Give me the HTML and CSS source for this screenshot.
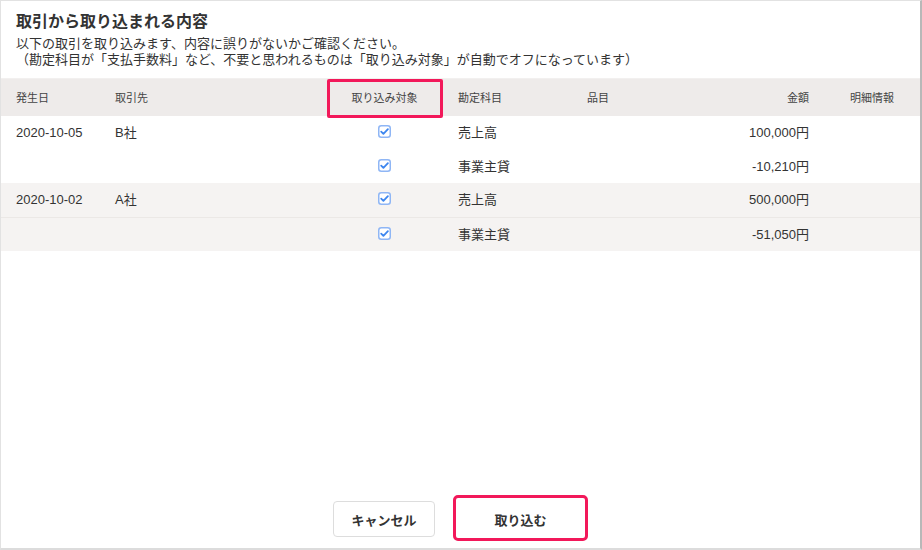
FILE: index.html
```html
<!DOCTYPE html>
<html lang="ja">
<head>
    <meta charset="UTF-8">
    <meta name="viewport" content="width=device-width, initial-scale=1.0">
    <title>取引から取り込まれる内容</title>
    <link rel="stylesheet" href="styles.css">
</head>
<body>
    <div class="modal">
        <div class="modal-body">
            <h1 class="modal-title">取引から取り込まれる内容</h1>
            <p class="modal-desc">以下の取引を取り込みます、内容に誤りがないかご確認ください。<br>（勘定科目が「支払手数料」など、不要と思われるものは「取り込み対象」が自動でオフになっています）</p>

            <table class="deal-table">
                <colgroup>
                    <col style="width: 99px">
                    <col style="width: 226px">
                    <col style="width: 117px">
                    <col style="width: 129px">
                    <col style="width: 132px">
                    <col style="width: 120px">
                    <col>
                </colgroup>
                <thead>
                    <tr>
                        <th>発生日</th>
                        <th>取引先</th>
                        <th class="center highlight">取り込み対象</th>
                        <th>勘定科目</th>
                        <th>品目</th>
                        <th class="right">金額</th>
                        <th class="center">明細情報</th>
                    </tr>
                </thead>
                <tbody class="group">
                    <tr>
                        <td>2020-10-05</td>
                        <td>B社</td>
                        <td class="center"><span class="check"></span></td>
                        <td>売上高</td>
                        <td></td>
                        <td class="right">100,000円</td>
                        <td></td>
                    </tr>
                    <tr>
                        <td></td>
                        <td></td>
                        <td class="center"><span class="check"></span></td>
                        <td>事業主貸</td>
                        <td></td>
                        <td class="right">-10,210円</td>
                        <td></td>
                    </tr>
                </tbody>
                <tbody class="group alt">
                    <tr>
                        <td>2020-10-02</td>
                        <td>A社</td>
                        <td class="center"><span class="check"></span></td>
                        <td>売上高</td>
                        <td></td>
                        <td class="right">500,000円</td>
                        <td></td>
                    </tr>
                    <tr>
                        <td></td>
                        <td></td>
                        <td class="center"><span class="check"></span></td>
                        <td>事業主貸</td>
                        <td></td>
                        <td class="right">-51,050円</td>
                        <td></td>
                    </tr>
                </tbody>
            </table>
        </div>

        <div class="modal-footer">
            <button class="btn">キャンセル</button>
            <button class="btn btn-primary">取り込む</button>
        </div>
    </div>

    <script>
        // checkbox icon
        const checkSvg = '<svg width="13" height="13" viewBox="0 0 13 13">' +
            '<rect x="0.75" y="0.75" width="11.5" height="11.5" rx="2.5" fill="#fff" stroke="#8fb6f5" stroke-width="1.5"/>' +
            '<path d="M3.2 6.6 L5.4 8.8 L9.9 4.2" fill="none" stroke="#3d86ef" stroke-width="1.8" stroke-linecap="round" stroke-linejoin="round"/>' +
            '</svg>';
        document.querySelectorAll('.check').forEach(el => {
            el.innerHTML = checkSvg;
        });
    </script>
</body>
</html>
```

FILE: styles.css
```css
html, body {
    margin: 0;
    height: 100%;
}
body {
    font-family: 'Liberation Sans', 'Noto Sans CJK JP', sans-serif;
    color: #333333;
    background: #ffffff;
}
.modal {
    box-sizing: border-box;
    height: 100vh;
    display: flex;
    flex-direction: column;
    border: 1px solid #e2e2e2;
    border-right: 2px solid #b8b8b8;
    border-bottom: 2px solid #dcdcdc;
}
.modal-body {
    flex: 1;
    padding-top: 10px;
}
.modal-title {
    margin: 0;
    padding: 0 15px;
    font-size: 16px;
    line-height: 22px;
    font-weight: bold;
    color: #333333;
}
.modal-desc {
    margin: 3px 0 10px;
    padding: 0 15px;
    font-size: 13px;
    line-height: 16px;
}
.deal-table {
    width: 100%;
    table-layout: fixed;
    border-collapse: collapse;
    border-top: 1px solid #f2f0ef;
}
.deal-table th {
    height: 37px;
    padding: 0 15px;
    background: #eeebea;
    font-size: 11px;
    line-height: 14px;
    font-weight: normal;
    text-align: left;
    color: #444444;
}
.deal-table td {
    height: 33px;
    padding: 0 15px;
    font-size: 13px;
    line-height: 16px;
    white-space: nowrap;
}
.deal-table tbody tr:first-child td {
    height: 34px;
}
.deal-table .center {
    text-align: center;
}
.deal-table .right {
    text-align: right;
}
.deal-table th.highlight {
    position: relative;
}
.deal-table th.highlight::after {
    content: '';
    position: absolute;
    left: 1px;
    right: 0;
    top: 0;
    bottom: -2px;
    border: 3px solid #f2185a;
    border-radius: 2px;
}
.group.alt td {
    background: #f5f3f2;
}
.group.alt tr + tr td {
    border-top: 1px solid #ebe8e6;
}
.check {
    display: inline-block;
    width: 13px;
    height: 13px;
    vertical-align: middle;
    position: relative;
    top: -2px;
}
.check svg {
    display: block;
}
.modal-footer {
    display: flex;
    justify-content: center;
    gap: 24px;
    padding: 0 6px 11px 0;
}
.btn {
    font-family: 'Liberation Sans', 'Noto Sans CJK JP', sans-serif;
    width: 102px;
    height: 36px;
    background: #ffffff;
    border: 1px solid #dddddd;
    border-radius: 4px;
    font-size: 13px;
    font-weight: bold;
    color: #333333;
    cursor: pointer;
}
.btn-primary {
    position: relative;
    width: 123px;
    border-color: #ffffff;
}
.btn-primary::after {
    content: '';
    position: absolute;
    left: -7px;
    right: -7px;
    top: -7px;
    bottom: -5px;
    border: 3px solid #f2185a;
    border-radius: 5px;
}
```
